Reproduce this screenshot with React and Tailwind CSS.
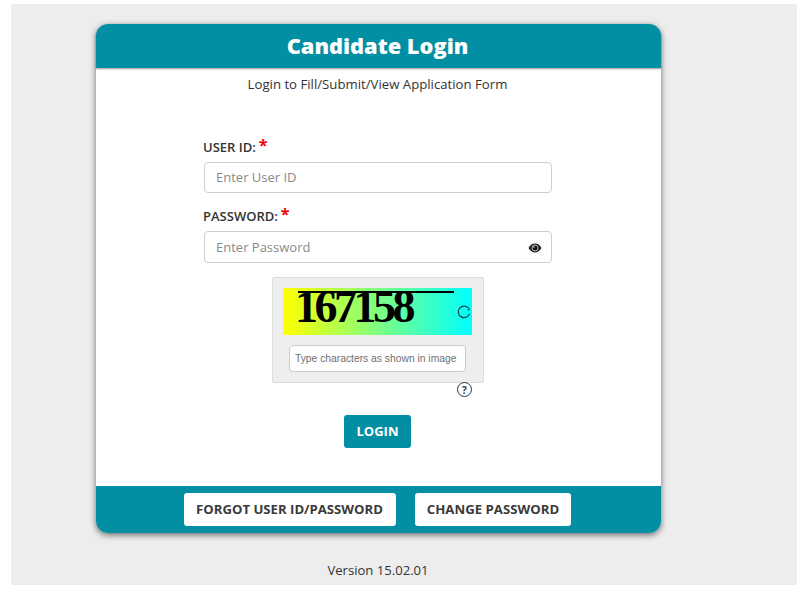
import React from "react";

const font = { fontFamily: '"Open Sans", "Noto Sans", sans-serif' };

function Req() {
  return <span className="relative top-[-3px] ml-[3px] text-[16px] font-bold leading-none text-[#f00000]">*</span>;
}

function Eye() {
  return (
    <svg width="14" height="10" viewBox="0 0 14 10" className="shrink-0">
      <path d="M0.5 5C2.2 2 4.4 0.6 7 0.6S11.8 2 13.5 5C11.8 8 9.6 9.4 7 9.4S2.2 8 0.5 5Z" fill="#222" />
      <circle cx="7" cy="5" r="3" fill="#111" stroke="#ddd" strokeWidth="0.8" />
      <circle cx="6" cy="4" r="1" fill="#888" />
    </svg>
  );
}

function Refresh() {
  return (
    <svg width="14" height="14" viewBox="0 0 14 14" fill="none" stroke="#0f4a52" strokeWidth="1.3">
      <path d="M12.6 8.6A5.8 5.8 0 1 1 11.6 3.2" />
      <path d="M12.8 5.2L10 5.4L12.4 2.6Z" fill="#0f4a52" stroke="none" />
    </svg>
  );
}

function Help() {
  return (
    <span className="flex h-[15px] w-[15px] items-center justify-center rounded-full border border-[#1d3a40] text-[10px] font-bold leading-none text-[#1d3a40]">
      ?
    </span>
  );
}

export default function App() {
  return (
    <div style={font} className="h-[592px] w-[803px] overflow-hidden bg-white pl-[11px] pr-[6px] pt-[4px]">
      <div className="h-[581px] w-[786px] bg-[#ededed] pl-[85px] pt-[20px]">
        <div className="w-[565px] rounded-[12px] bg-white shadow-[0_2px_6px_rgba(0,0,0,0.55)]">
          <div className="flex h-[44px] items-center justify-center rounded-t-[12px] bg-[#028fa3] pr-[2px] pt-[1px] text-[21.8px] font-extrabold text-white shadow-[0_1px_2px_rgba(0,0,0,0.4)]">
            Candidate Login
          </div>
          <div className="flex h-[418px] flex-col items-center pr-[1px]">
            <p className="mr-[1px] mt-[7px] text-[13.2px] leading-[18px] text-[#333]">Login to Fill/Submit/View Application Form</p>
            <div className="mt-[43px] w-[348px]">
              <label className="ml-[-1px] flex h-[24px] items-center text-[13px] font-semibold text-[#333]">
                USER ID:<Req />
              </label>
              <div className="mt-[2px] flex h-[31px] items-center rounded-[4px] border border-[#cfcfcf] bg-white pl-[11px] pt-[1px] text-[13px] text-[#8a8a8a]">
                Enter User ID
              </div>
              <label className="ml-[-1px] mt-[12px] flex h-[24px] items-center text-[13px] font-semibold text-[#333]">
                PASSWORD:<Req />
              </label>
              <div className="mt-[2px] flex h-[32px] items-center justify-between rounded-[4px] border border-[#cfcfcf] bg-white pl-[11px] pr-[9px] pt-[1px] text-[13px] text-[#8a8a8a]">
                Enter Password
                <Eye />
              </div>
            </div>
            <div className="mt-[14px] flex h-[106px] w-[212px] flex-col rounded-[2px] border border-[#dcdcdc] bg-[#eeeeee] pt-[10px]">
              <div className="relative ml-[10px] flex h-[47px] w-[189px] items-center justify-between bg-[linear-gradient(90deg,#ffff00,#00ffff)] pl-[12px] pr-[1px]">
                <span
                  style={{ fontFamily: '"Liberation Serif", serif' }}
                  className="mt-[-10px] text-[46px] font-bold leading-none tracking-[-3.5px] text-black"
                >
                  167158
                </span>
                <span className="absolute left-[15px] top-[3px] h-[2px] w-[156px] bg-black" />
                <Refresh />
              </div>
              <div
                style={{ fontFamily: '"Liberation Sans", sans-serif' }}
                className="ml-[16px] mt-[10px] flex h-[27px] w-[177px] items-center rounded-[4px] border border-[#cccccc] bg-white pl-[5px] text-[10.3px] text-[#6f6f6f]"
              >
                Type characters as shown in image
              </div>
            </div>
            <div className="flex w-[212px] justify-end">
              <span className="mr-[12px] mt-[-1px]"><Help /></span>
            </div>
            <button className="mr-[1px] mt-[18px] h-[33px] w-[67px] rounded-[3px] bg-[#028fa3] pt-[1px] text-[13px] font-bold text-white">
              LOGIN
            </button>
          </div>
          <div className="flex h-[47px] items-center justify-center gap-[19px] rounded-b-[12px] bg-[#028fa3] pr-[2px]">
            <button className="h-[33px] w-[212px] rounded-[3px] bg-white pr-[1px] text-[13.15px] font-bold text-[#3a3a3a]">
              FORGOT USER ID/PASSWORD
            </button>
            <button className="h-[33px] w-[156px] rounded-[3px] bg-white text-[13.2px] font-bold text-[#3a3a3a]">
              CHANGE PASSWORD
            </button>
          </div>
        </div>
        <p className="mt-[28px] w-[564px] text-center text-[13.1px] leading-[18px] text-[#333]">Version 15.02.01</p>
      </div>
    </div>
  );
}
